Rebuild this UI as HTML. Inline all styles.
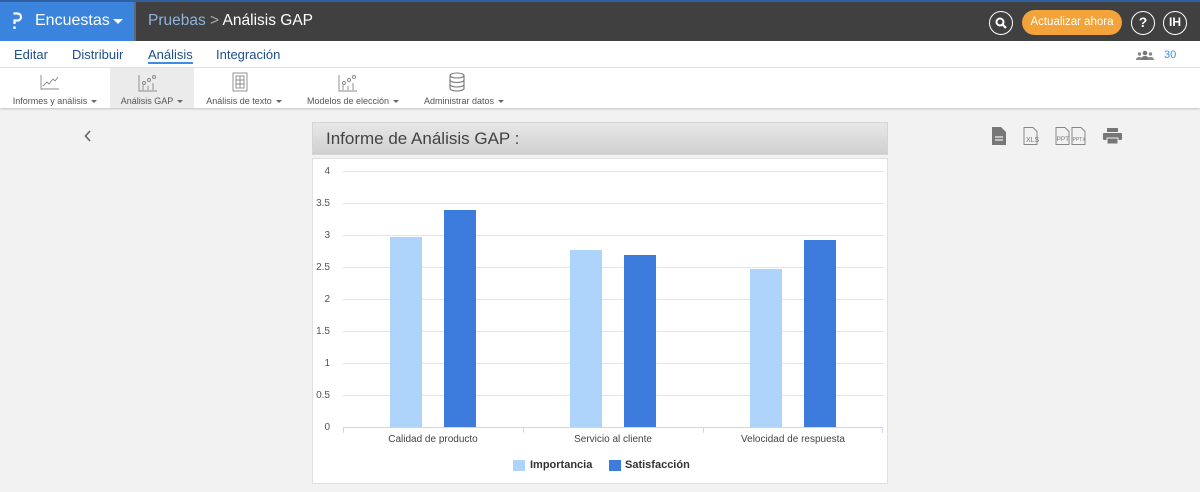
<!DOCTYPE html>
<html><head><meta charset="utf-8"><style>
*{margin:0;padding:0;box-sizing:border-box}
body{width:1200px;height:492px;overflow:hidden;background:#f2f2f2;font-family:"Liberation Sans",sans-serif;position:relative}
.abs{position:absolute}
#top{left:0;top:0;width:1200px;height:41px;background:#404040;border-top:2px solid #2f5f9f}
#brand{left:0;top:0;width:134px;height:39px;background:#3b84de;color:#fff;font-size:16px}
#nav{left:0;top:41px;width:1200px;height:27px;background:#fff;border-bottom:1px solid #e4e4e4}
#tool{left:0;top:68px;width:1200px;height:40px;background:#fff;box-shadow:0 1px 2px rgba(0,0,0,.2)}
.tl{position:absolute;top:0;height:40px;font-size:9px;color:#555;text-align:center}
.tl .lab{position:absolute;top:28px;left:0;right:0;white-space:nowrap}
.nv{position:absolute;top:6px;font-size:13px;color:#1e4e8c}
.car{display:inline-block;width:0;height:0;border-left:3px solid transparent;border-right:3px solid transparent;border-top:3px solid #666;vertical-align:middle;margin-left:4px}
.circ{position:absolute;top:9px;width:24px;height:24px;border:1.5px solid #fff;border-radius:50%;color:#fff;font-weight:bold;font-size:12px;text-align:center;line-height:21px}
.yl{position:absolute;right:870px;font-size:10px;color:#555;text-align:right}
.gl{position:absolute;left:343px;width:540px;height:1px;background:#e3e3e3}
.bar{position:absolute}
.lt{background:#afd4fb}.dk{background:#3d7bdc}
</style></head><body>
<div id="top" class="abs">
 <div id="brand" class="abs"><svg class="abs" style="left:12px;top:10px" width="11" height="18" viewBox="0 0 11 18"><path d="M1.5 1.5h4a3.5 3.5 0 0 1 0 7H2.5V12" fill="none" stroke="#fff" stroke-width="2.2"/><rect x="1.3" y="14.5" width="2.4" height="2.4" fill="#fff"/></svg><span style="position:absolute;left:35px;top:10px">Encuestas</span><span style="position:absolute;left:113px;top:17px;border-left:5px solid transparent;border-right:5px solid transparent;border-top:5px solid #fff"></span></div>
 <div class="abs" style="left:134px;top:0;width:2px;height:39px;background:#5a6a80"></div>
 <div class="abs" style="left:148px;top:10px;font-size:15.5px;color:#fff"><span style="color:#8fb3d9">Pruebas</span> <span style="color:#aaa">&gt;</span> Análisis GAP</div>
 <div class="circ" style="left:989px">
  <svg width="12" height="12" viewBox="0 0 12 12" style="margin-top:5px"><circle cx="5" cy="5" r="3.5" fill="none" stroke="#fff" stroke-width="2"/><path d="M7.5 7.5L11 11" stroke="#fff" stroke-width="2.2"/></svg></div>
 <div class="abs" style="left:1022px;top:8px;width:100px;height:25px;border-radius:13px;background:#f2a33a;color:#fff;font-size:11.5px;text-align:center;line-height:25px">Actualizar ahora</div>
 <div class="circ" style="left:1131px;font-size:14px">?</div>
 <div class="circ" style="left:1163px">IH</div>
</div>
<div id="nav" class="abs">
 <span class="nv" style="left:14px">Editar</span>
 <span class="nv" style="left:72px">Distribuir</span>
 <span class="nv" style="left:148px;border-bottom:2px solid #3d8ee0;padding-bottom:0">Análisis</span>
 <span class="nv" style="left:216px">Integración</span>
 <svg class="abs" style="left:1136px;top:9px" width="18" height="10" viewBox="0 0 18 10"><circle cx="9" cy="3" r="2.3" fill="#777"/><path d="M5 10c0-3 2-4 4-4s4 1 4 4z" fill="#777"/><circle cx="3.5" cy="4" r="1.7" fill="#888"/><circle cx="14.5" cy="4" r="1.7" fill="#888"/><path d="M0 10c0-2 1.5-3 3.5-3s3 1 3 3zM11.5 10c0-2 1-3 3-3s3.5 1 3.5 3z" fill="#888"/></svg>
 <span class="abs" style="left:1164px;top:8px;font-size:11px;color:#3d8ee0">30</span>
</div>
<div id="tool" class="abs">
 <div class="tl" style="left:0;width:110px"><svg class="abs" style="left:40px;top:6px" width="20" height="16" viewBox="0 0 20 16" fill="none" stroke="#888" stroke-width="0.9"><path d="M1 1V15H19M3 12l4-4 2 2 4-5 2 2 3-4"/></svg><div class="lab">Informes y análisis<span class="car"></span></div></div>
 <div class="tl" style="left:110px;width:84px;background:#ebebeb"><svg class="abs" style="left:28px;top:6px" width="20" height="18" viewBox="0 0 20 18" fill="none" stroke="#888" stroke-width="0.9"><path d="M1 1V17H19M5 16v-5M10 16v-4M15 16v-7"/><circle cx="6" cy="9" r="1.5"/><circle cx="11" cy="6" r="1.5"/><circle cx="16" cy="3" r="1.5"/></svg><div class="lab">Análisis GAP<span class="car"></span></div></div>
 <div class="tl" style="left:194px;width:100px"><svg class="abs" style="left:38px;top:4px" width="16" height="20" viewBox="0 0 16 20" fill="none" stroke="#888" stroke-width="0.9"><rect x="1" y="1" width="14" height="18"/><rect x="4" y="4" width="8" height="12"/><path d="M4 8h8M4 12h8M8 4v12"/></svg><div class="lab">Análisis de texto<span class="car"></span></div></div>
 <div class="tl" style="left:294px;width:118px"><svg class="abs" style="left:44px;top:6px" width="20" height="18" viewBox="0 0 20 18" fill="none" stroke="#888" stroke-width="0.9"><path d="M1 1V17H19M5 16v-5M10 16v-4M15 16v-7"/><circle cx="6" cy="9" r="1.5"/><circle cx="11" cy="6" r="1.5"/><circle cx="16" cy="3" r="1.5"/></svg><div class="lab">Modelos de elección<span class="car"></span></div></div>
 <div class="tl" style="left:412px;width:104px"><svg class="abs" style="left:37px;top:4px" width="16" height="20" viewBox="0 0 16 20" fill="none" stroke="#777" stroke-width="1.1"><ellipse cx="8" cy="3.5" rx="7" ry="2.5"/><path d="M1 3.5v13c0 1.4 3 2.5 7 2.5s7-1.1 7-2.5v-13M1 8c0 1.4 3 2.5 7 2.5s7-1.1 7-2.5M1 12.5c0 1.4 3 2.5 7 2.5s7-1.1 7-2.5"/></svg><div class="lab">Administrar datos<span class="car"></span></div></div>
</div>
<svg class="abs" style="left:84px;top:130px" width="8" height="12" viewBox="0 0 8 12"><path d="M6 1L1.5 6 6 11" fill="none" stroke="#666" stroke-width="1.6"/></svg>
<svg class="abs" style="left:992px;top:127px" width="14" height="18" viewBox="0 0 14 18"><path d="M0 0h9l5 5v13H0z" fill="#777"/><path d="M3 10h8M3 13h8" stroke="#eee" stroke-width="1.3"/></svg>
<svg class="abs" style="left:1023px;top:127px" width="18" height="18" viewBox="0 0 18 18"><path d="M1 .5h9l4 4v13H1z" fill="none" stroke="#888"/><text x="3" y="15" font-size="7" fill="#777" font-family="Liberation Sans">XLS</text></svg>
<svg class="abs" style="left:1055px;top:127px" width="34" height="18" viewBox="0 0 34 18"><path d="M1 .5h9l4 4v13H1zM17 .5h9l4 4v13H17z" fill="none" stroke="#888"/><text x="1.5" y="14" font-size="6.5" fill="#777" font-family="Liberation Sans">PPT</text><text x="17.5" y="14" font-size="5" fill="#777" font-family="Liberation Sans">PPTX</text></svg>
<svg class="abs" style="left:1103px;top:128px" width="19" height="16" viewBox="0 0 19 16"><rect x="4" y="0" width="11" height="4" fill="#777"/><rect x="0" y="5" width="19" height="7" rx="1" fill="#777"/><rect x="4" y="10" width="11" height="6" fill="#777" stroke="#f2f2f2" stroke-width="1"/></svg>
<div class="abs" style="left:312px;top:122px;width:576px;height:33px;background:linear-gradient(#e8e8e8,#cfcfcf);border:1px solid #d5d5d5"><span style="position:absolute;left:13px;top:6px;font-size:17px;color:#444">Informe de Análisis GAP :</span></div>
<div class="abs" style="left:312px;top:158px;width:576px;height:326px;background:#fff;border:1px solid #e0e0e0"></div>
<div class="gl" style="top:171px"></div><div class="gl" style="top:203px"></div><div class="gl" style="top:235px"></div><div class="gl" style="top:267px"></div><div class="gl" style="top:299px"></div><div class="gl" style="top:331px"></div><div class="gl" style="top:363px"></div><div class="gl" style="top:395px"></div>
<div class="gl" style="top:427px;background:#ccd6eb"></div>
<div class="abs" style="left:343px;top:427px;width:1px;height:6px;background:#ccd6eb"></div><div class="abs" style="left:523px;top:427px;width:1px;height:6px;background:#ccd6eb"></div><div class="abs" style="left:703px;top:427px;width:1px;height:6px;background:#ccd6eb"></div><div class="abs" style="left:882px;top:427px;width:1px;height:6px;background:#ccd6eb"></div>
<div class="yl" style="top:166px">4</div><div class="yl" style="top:198px">3.5</div><div class="yl" style="top:230px">3</div><div class="yl" style="top:262px">2.5</div><div class="yl" style="top:294px">2</div><div class="yl" style="top:326px">1.5</div><div class="yl" style="top:358px">1</div><div class="yl" style="top:390px">0.5</div><div class="yl" style="top:422px">0</div>
<div class="bar lt" style="left:390px;top:237px;width:32px;height:190px"></div>
<div class="bar dk" style="left:444px;top:210px;width:32px;height:217px"></div>
<div class="bar lt" style="left:570px;top:250px;width:32px;height:177px"></div>
<div class="bar dk" style="left:624px;top:255px;width:32px;height:172px"></div>
<div class="bar lt" style="left:750px;top:269px;width:32px;height:158px"></div>
<div class="bar dk" style="left:804px;top:240px;width:32px;height:187px"></div>
<div class="abs" style="left:343px;top:434px;width:180px;text-align:center;font-size:10px;color:#444">Calidad de producto</div>
<div class="abs" style="left:523px;top:434px;width:180px;text-align:center;font-size:10px;color:#444">Servicio al cliente</div>
<div class="abs" style="left:703px;top:434px;width:180px;text-align:center;font-size:10px;color:#444">Velocidad de respuesta</div>
<div class="abs" style="left:513px;top:460px;width:12px;height:11px;background:#afd4fb"></div>
<div class="abs" style="left:530px;top:459px;font-size:11px;font-weight:bold;color:#333">Importancia</div>
<div class="abs" style="left:609px;top:460px;width:12px;height:11px;background:#3d7bdc"></div>
<div class="abs" style="left:625px;top:459px;font-size:11px;font-weight:bold;color:#333">Satisfacción</div>
</body></html>
